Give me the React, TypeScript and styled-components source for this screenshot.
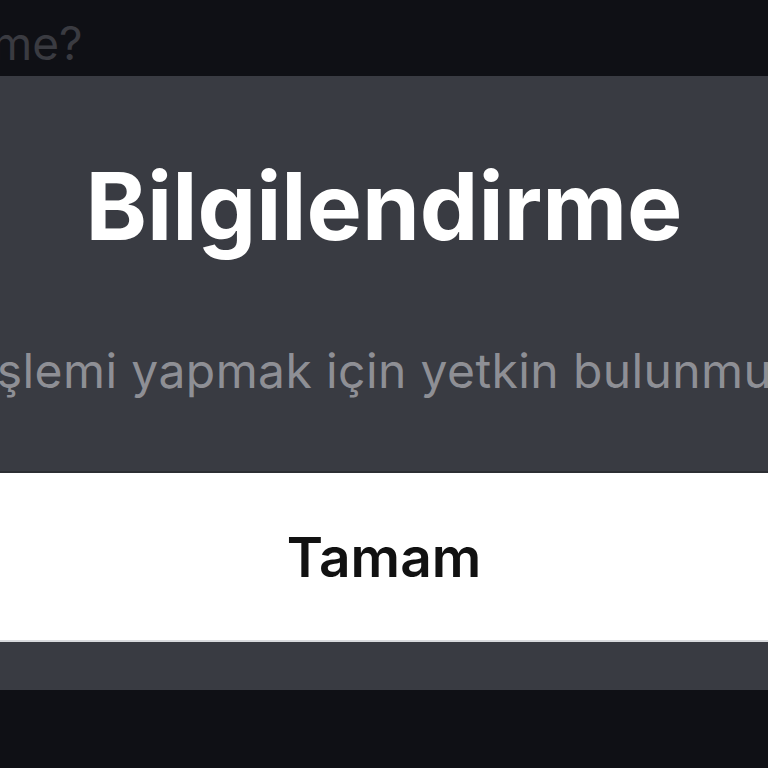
import styled, { createGlobalStyle } from "styled-components";

const GlobalStyle = createGlobalStyle`
  html, body {
    margin: 0;
    padding: 0;
    background: #0f1015;
  }
  * {
    box-sizing: border-box;
  }
`;

const Screen = styled.div`
  width: 768px;
  height: 768px;
  overflow: hidden;
  background: #0f1015;
  display: flex;
  flex-direction: column;
  font-family: Inter, "Noto Sans", sans-serif;
`;

const BehindText = styled.div`
  height: 76px;
  padding-top: 13px;
  margin-left: -8px;
  font-size: 46px;
  line-height: 60px;
  color: #3a3b41;
  white-space: nowrap;
`;

const Dialog = styled.div`
  height: 614px;
  background: #393b42;
  display: flex;
  flex-direction: column;
`;

const Title = styled.h2`
  margin: 0;
  padding-top: 75px;
  text-align: center;
  font-size: 93px;
  line-height: 110px;
  font-weight: 700;
  letter-spacing: 0;
  color: #ffffff;
`;

const Message = styled.p`
  margin: 0;
  padding-top: 80px;
  display: flex;
  justify-content: center;
  white-space: nowrap;
  font-size: 48px;
  line-height: 60px;
  letter-spacing: 0.4px;
  color: #8e8f95;
`;

const Actions = styled.div`
  margin-top: auto;
  padding-bottom: 48px;
`;

const OkButton = styled.button`
  width: 100%;
  height: 171px;
  border: none;
  border-top: 2px solid #2c2e33;
  border-bottom: 2px solid #d8dadd;
  background: #ffffff;
  color: #111111;
  font-family: inherit;
  font-size: 55px;
  font-weight: 600;
  letter-spacing: 0;
  cursor: pointer;
`;

export default function App() {
  return (
    <>
      <GlobalStyle />
      <Screen>
        <BehindText>me?</BehindText>
        <Dialog>
          <Title>Bilgilendirme</Title>
          <Message>
            <span>Bu işlemi yapmak için yetkin bulunmuyor.</span>
          </Message>
          <Actions>
            <OkButton>Tamam</OkButton>
          </Actions>
        </Dialog>
      </Screen>
    </>
  );
}
